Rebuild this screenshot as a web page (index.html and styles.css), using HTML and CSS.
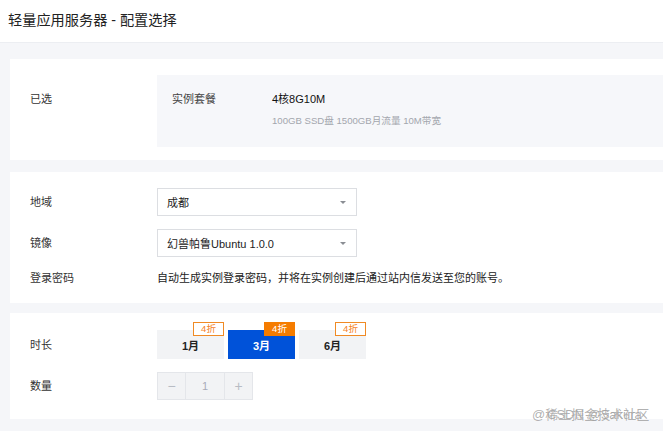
FILE: index.html
```html
<!DOCTYPE html>
<html lang="zh-CN">
<head>
<meta charset="utf-8">
<title>轻量应用服务器 - 配置选择</title>
<link rel="stylesheet" href="styles.css">
</head>
<body>
<header class="top">
  <h1 class="title">轻量应用服务器 - 配置选择</h1>
</header>
<main class="main">
  <section class="card card-selected">
    <div class="label label-top">已选</div>
    <div class="summary">
      <div class="summary-name">实例套餐</div>
      <div class="summary-body">
        <div class="summary-value">4核8G10M</div>
        <div class="summary-desc">100GB SSD盘 1500GB月流量 10M带宽</div>
      </div>
    </div>
  </section>

  <section class="card card-config">
    <div class="row">
      <div class="label">地域</div>
      <div class="select"><span>成都</span><i class="caret"></i></div>
    </div>
    <div class="row">
      <div class="label">镜像</div>
      <div class="select"><span>幻兽帕鲁Ubuntu 1.0.0</span><i class="caret"></i></div>
    </div>
    <div class="row">
      <div class="label">登录密码</div>
      <div class="note">自动生成实例登录密码，并将在实例创建后通过站内信发送至您的账号。</div>
    </div>
  </section>

  <section class="card card-buy">
    <div class="row">
      <div class="label">时长</div>
      <div class="periods">
        <div class="period">1月<span class="badge">4折</span></div>
        <div class="period active">3月<span class="badge">4折</span></div>
        <div class="period">6月<span class="badge">4折</span></div>
      </div>
    </div>
    <div class="row">
      <div class="label">数量</div>
      <div class="stepper">
        <span class="step minus">−</span>
        <span class="step-value">1</span>
        <span class="step plus">+</span>
      </div>
    </div>
  </section>
</main>
<div class="watermark"><span class="wm-a">@稀土掘金技术社区</span><span class="wm-b">CSDN @Sakura</span></div>
</body>
</html>
```

FILE: styles.css
```css
* { box-sizing: border-box; }
html, body { margin: 0; padding: 0; }
body {
  background: #f5f6f9;
  font-family: "Liberation Sans", "Noto Sans CJK SC", sans-serif;
  color: #333;
  font-size: 11px;
  width: 663px;
  height: 431px;
  overflow: hidden;
  position: relative;
}
.top {
  height: 43px;
  background: #fff;
  border-bottom: 1px solid #eceef2;
  padding-left: 8px;
}
.title {
  margin: 0;
  font-size: 14.2px;
  font-weight: 400;
  line-height: 40px;
  color: #222;
}
.main {
  padding: 16px 0 0 10px;
  display: flex;
  flex-direction: column;
}
.card {
  background: #fff;
  padding-left: 20px;
}
.label {
  width: 127px;
  flex: none;
  line-height: 16px;
  color: #333;
}
.card-selected {
  display: flex;
  padding-top: 16px;
  padding-bottom: 13px;
  margin-bottom: 12px;
}
.label-top { padding-top: 16px; }
.summary {
  flex: 1;
  background: #f6f7fa;
  display: flex;
  padding: 16px 0 19px 15px;
}
.summary-name { width: 100px; line-height: 16px; color: #444; }
.summary-value { line-height: 16px; color: #111; }
.summary-desc {
  margin-top: 7px;
  line-height: 14px;
  font-size: 9.6px;
  color: #a3a6ad;
}
.row {
  display: flex;
  align-items: center;
}
.card-config {
  padding-top: 16px;
  padding-bottom: 17px;
  margin-bottom: 10px;
  display: flex;
  flex-direction: column;
  gap: 13px;
}
.select {
  width: 200px;
  height: 28px;
  border: 1px solid #dcdee2;
  display: flex;
  align-items: center;
  justify-content: space-between;
  padding: 0 10px 0 9px;
  color: #222;
}
.caret {
  width: 0;
  height: 0;
  border-left: 3.5px solid transparent;
  border-right: 3.5px solid transparent;
  border-top: 3.5px solid #8a8d93;
}
.note { color: #222; line-height: 16px; }
.card-buy {
  padding-top: 17px;
  padding-bottom: 19px;
  display: flex;
  flex-direction: column;
  gap: 13px;
}
.periods { display: flex; gap: 4px; }
.period {
  position: relative;
  width: 67px;
  height: 29px;
  background: #f2f3f5;
  display: flex;
  align-items: center;
  justify-content: center;
  color: #222;
  font-weight: 700;
}
.period.active { background: #0052d9; color: #fff; }
.badge {
  position: absolute;
  top: -8px;
  right: 0;
  width: 31px;
  height: 14px;
  border: 1px solid #f08a24;
  background: #fff;
  color: #f5821f;
  font-size: 9.5px;
  font-weight: 400;
  line-height: 12px;
  text-align: center;
}
.period.active .badge { background: #f57c00; border-color: #f57c00; color: #fff; }
.stepper {
  display: flex;
  height: 28px;
  border: 1px solid #e4e6ea;
  background: #f2f3f5;
  color: #b8bcc4;
}
.step, .step-value {
  display: flex;
  align-items: center;
  justify-content: center;
}
.step { width: 27px; font-size: 14px; }
.step-value {
  width: 40px;
  border-left: 1px solid #e4e6ea;
  border-right: 1px solid #e4e6ea;
  color: #a7abb8;
}
.watermark {
  position: absolute;
  right: 5px;
  bottom: 8px;
  height: 16px;
  width: 126px;
  font-size: 13px;
  line-height: 16px;
  color: rgba(110, 110, 110, 0.55);
  text-shadow: 0 0 1px rgba(255,255,255,0.8);
}
.wm-a, .wm-b { position: absolute; top: 0; white-space: nowrap; }
.wm-a { left: 0; }
.wm-b { left: 15px; }
```
